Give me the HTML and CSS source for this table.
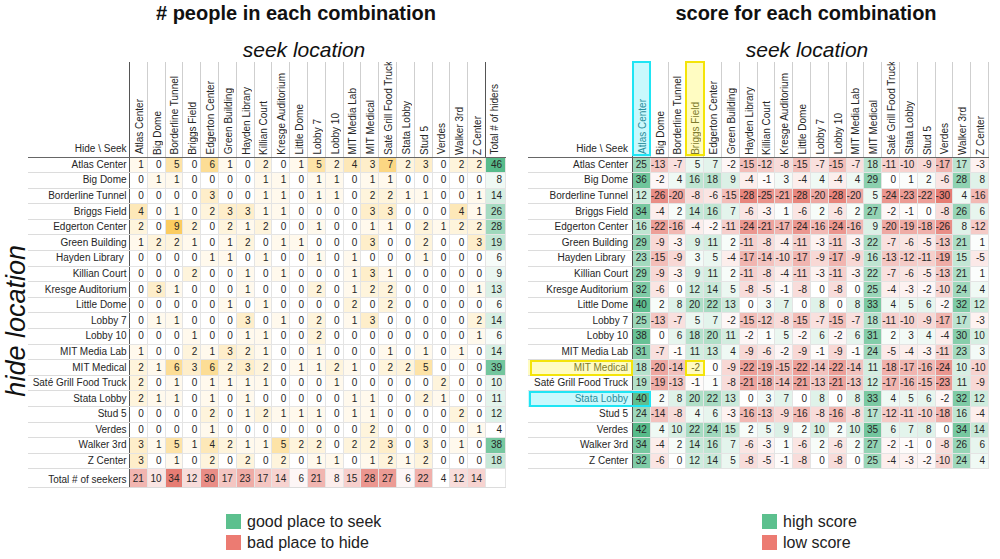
FILE: index.html
```html
<!DOCTYPE html>
<html lang="en">
<head>
<meta charset="utf-8">
<title>Hide and seek combinations</title>
<link rel="stylesheet" href="styles.css">
<script src="script.js" defer></script>
</head>
<body>
<div class="panels">
  <section class="panel panel-people">
    <h2 class="title"># people in each combination</h2>
    <div class="axis-seek">seek location</div>
    <div class="chart">
      <div class="axis-hide"><span>hide location</span></div>
      <table class="grid grid-people" id="people-table"></table>
    </div>
  </section>
  <section class="panel panel-score">
    <h2 class="title">score for each combination</h2>
    <div class="axis-seek">seek location</div>
    <div class="chart">
      <table class="grid grid-score" id="score-table"></table>
      <div class="mark mark-cyan mark-atlas"></div>
      <div class="mark mark-yellow mark-briggs"></div>
      <div class="mark mark-yellow mark-medical"></div>
      <div class="mark mark-yellow mark-medcell"></div>
      <div class="mark mark-cyan mark-stata"></div>
    </div>
  </section>
</div>
<div class="legend">
  <ul class="key">
    <li><i class="swatch swatch-good"></i>good place to seek</li>
    <li><i class="swatch swatch-bad"></i>bad place to hide</li>
  </ul>
  <ul class="key">
    <li><i class="swatch swatch-good"></i>high score</li>
    <li><i class="swatch swatch-bad"></i>low score</li>
  </ul>
</div>
</body>
</html>
```

FILE: styles.css
```css
* { box-sizing: border-box; }
html, body { margin: 0; padding: 0; }
body {
  width: 1000px;
  height: 559px;
  overflow: hidden;
  background: #fff;
  font-family: "Liberation Sans", Arial, sans-serif;
  color: #222;
}
.panels { display: flex; height: 500px; }
.panel { flex: none; overflow: hidden; }
.panel-people { width: 506px; }
.panel-score { width: 494px; }

.title {
  margin: 0;
  font-size: 20px;
  font-weight: bold;
  line-height: 27px;
  text-align: center;
  white-space: nowrap;
  color: #111;
}
.panel-people .title { padding-left: 86px; }
.panel-score .title { padding-left: 106px; }

.axis-seek {
  height: 35px;
  padding-top: 11px;
  font-size: 21px;
  font-style: italic;
  line-height: 24px;
  text-align: center;
  white-space: nowrap;
  color: #111;
}
.panel-people .axis-seek { padding-left: 102px; }
.panel-score .axis-seek { padding-left: 108px; }

.chart { display: flex; align-items: flex-start; }
.panel-score .chart { margin-left: 22px; position: relative; }

.axis-hide {
  width: 28px;
  height: 415px;
  padding-top: 103px;
  display: flex;
  align-items: center;
  justify-content: flex-end;
}
.axis-hide span {
  writing-mode: vertical-rl;
  transform: rotate(180deg);
  font-size: 27px;
  font-style: italic;
  line-height: 24px;
  white-space: nowrap;
  color: #111;
}

/* tables */
.grid {
  border-collapse: collapse;
  table-layout: fixed;
  font-size: 10px;
  color: #262626;
}
.grid-people { width: 478px; }
.grid-score { width: 460.5px; }
.col-label { width: 102px; }
.grid-score .col-label { width: 104.5px; }
.col-data { width: 17.8px; }
.col-total { width: 20px; }

.grid th, .grid td { padding: 0; font-weight: normal; white-space: nowrap; overflow: hidden; }

.grid thead th {
  height: 95px;
  vertical-align: bottom;
  border-bottom: 1px solid #666;
  border-left: 1px solid #cfcfcf;
}
.grid thead th.corner {
  border-left: none;
  text-align: right;
  padding: 0 2.5px 3px 0;
}
.grid-score thead th.corner { padding-right: 4px; }
.grid-score thead th:last-child { border-right: 1px solid #cfcfcf; }

.vh {
  height: 94px;
  display: flex;
  align-items: flex-end;
  justify-content: flex-end;
  padding: 0 1px 2px 0;
}
.vh span {
  writing-mode: vertical-rl;
  transform: rotate(180deg);
  line-height: 12px;
  white-space: nowrap;
}
.grid thead th.total .vh { justify-content: center; padding-right: 2px; }

.grid tbody tr { height: 15.6px; }
.grid tbody th {
  text-align: right;
  padding-right: 2.5px;
  border-bottom: 1px solid #dcdcdc;
  line-height: 14px;
}
.grid-score tbody th { padding-right: 4px; }
.grid td {
  text-align: right;
  padding-right: 3px;
  line-height: 14px;
  border: 1px solid #e4e4e4;
}
.grid .first { border-left: 1px solid #555; }
.grid .total { border-left: 1px solid #555; }
.grid thead th.first, .grid thead th.total { border-left: 1px solid #555; }

.grid tfoot tr { height: 19px; }
.grid tfoot th, .grid tfoot td { border-top: 1px solid #555; border-bottom: 1px solid #dcdcdc; padding-top: 2px; }
.grid tfoot th { text-align: right; padding-right: 2.5px; }

.hl-cyan { background: #c9f9fd; color: #2a8d9b; }
.hl-yellow { background: #fffcc2; color: #7d7a2c; }
.grid td.hl-yellow { background: #fffbc0; color: #6f6c28; }

/* highlight frames over the score chart */
.mark {
  position: absolute;
  border: 2px solid;
  pointer-events: none;
}
.mark-cyan { border-color: #1fe5f4; }
.mark-yellow { border-color: #f4e409; }
.mark-atlas { left: 103.5px; top: -1px; width: 19.5px; height: 95px; }
.mark-briggs { left: 157px; top: -1px; width: 19.5px; height: 95px; }
.mark-medical { left: 2px; top: 297.5px; width: 103px; height: 16px; }
.mark-medcell { left: 157px; top: 297.5px; width: 19.5px; height: 16px; }
.mark-stata { left: 1px; top: 328.5px; width: 122px; height: 16.5px; }

/* legend */
.legend {
  display: grid;
  grid-template-columns: 536px auto;
  padding: 11px 0 0 226px;
}
.key { list-style: none; margin: 0; padding: 0; }
.key li {
  display: flex;
  align-items: center;
  height: 21px;
  font-size: 16px;
  color: #222;
  white-space: nowrap;
}
.swatch { display: block; width: 15px; height: 15px; margin-right: 6px; }
.swatch-good { background: #5cc08e; }
.swatch-bad { background: #ec7b72; }
```

FILE: script.js
```js
(function () {
  var names = ["Atlas Center", "Big Dome", "Borderline Tunnel", "Briggs Field", "Edgerton Center",
    "Green Building", "Hayden Library", "Killian Court", "Kresge Auditorium", "Little Dome",
    "Lobby 7", "Lobby 10", "MIT Media Lab", "MIT Medical", "Saté Grill Food Truck",
    "Stata Lobby", "Stud 5", "Verdes", "Walker 3rd", "Z Center"];
  var rowLabels = names.map(function (n) { return n === "Hayden Library" ? n + "\u00a0" : n; });

  var people = [
    [1,0,5,0,6,1,0,2,0,1,5,2,4,3,7,2,3,0,2,2],
    [0,1,1,0,0,0,0,1,1,0,1,1,0,1,1,0,0,0,0,0],
    [0,0,0,0,3,0,0,1,1,0,1,1,0,2,2,1,1,0,0,1],
    [4,0,1,0,2,3,3,1,1,0,0,0,0,3,3,0,0,0,4,1],
    [2,0,9,2,0,2,1,2,0,0,1,0,0,1,1,0,2,1,2,2],
    [1,2,2,1,0,1,2,0,1,1,0,0,0,3,0,0,2,0,0,3],
    [0,0,0,0,1,1,0,1,0,0,1,0,1,0,0,0,1,0,0,0],
    [0,0,0,2,0,0,1,0,1,0,0,0,1,3,1,0,0,0,0,0],
    [0,3,1,0,0,0,1,0,0,0,2,0,1,2,2,0,0,0,0,1],
    [0,0,0,0,0,1,0,1,0,0,0,0,2,0,2,0,0,0,0,0],
    [0,1,1,0,0,0,3,0,1,0,2,0,1,3,0,0,0,0,0,2],
    [0,0,0,1,0,0,1,1,0,0,2,0,0,0,0,0,0,0,0,1],
    [1,0,0,2,1,3,2,1,0,0,1,0,0,0,1,0,1,0,1,0],
    [2,1,6,3,6,2,3,2,0,1,1,2,1,0,2,2,5,0,0,0],
    [2,0,1,0,1,1,1,1,0,0,0,1,0,0,0,0,0,2,0,0],
    [2,1,1,0,1,0,1,0,0,0,0,0,1,1,0,0,2,1,0,0],
    [0,0,0,0,2,0,1,2,1,1,1,0,1,1,0,0,0,0,2,0],
    [0,0,0,0,1,0,0,0,0,0,0,0,0,2,0,0,0,0,0,1],
    [3,1,5,1,4,2,1,1,5,2,2,0,2,2,3,0,3,0,1,0],
    [3,0,1,0,2,0,2,0,2,0,1,1,0,1,2,1,2,0,0,0]
  ];
  var base = [25,-13,-7,5,7,-2,-15,-12,-8,-15,-7,-15,-7,18,-11,-10,-9,-17,17,-3];
  var shift = [0,11,-13,9,-9,4,-2,4,7,15,0,13,6,-7,-6,15,-1,17,9,7];

  var YEL = [251, 204, 96], GRN = [87, 187, 138], RED = [230, 124, 115];

  function mix(c, t) {
    t = Math.max(0, Math.min(1, t));
    if (t === 0) return "";
    var r = Math.round(255 + (c[0] - 255) * t);
    var g = Math.round(255 + (c[1] - 255) * t);
    var b = Math.round(255 + (c[2] - 255) * t);
    return "rgb(" + r + "," + g + "," + b + ")";
  }
  function td(v, bg, cls) {
    return "<td" + (cls ? ' class="' + cls + '"' : "") +
      (bg ? ' style="background:' + bg + '"' : "") + ">" + v + "</td>";
  }
  function colgroup(total) {
    var h = '<colgroup><col class="col-label">';
    for (var j = 0; j < names.length; j++) h += '<col class="col-data">';
    if (total) h += '<col class="col-total">';
    return h + "</colgroup>";
  }
  function head(hl, total) {
    var h = '<thead><tr><th class="corner">Hide \\ Seek</th>';
    names.forEach(function (n, j) {
      var cls = "colhead" + (j === 0 ? " first" : "") + (hl[j] ? " " + hl[j] : "");
      h += '<th class="' + cls + '"><div class="vh"><span>' + n + "</span></div></th>";
    });
    if (total) h += '<th class="colhead total"><div class="vh"><span>Total # of hiders</span></div></th>';
    return h + "</tr></thead>";
  }

  /* people table */
  var rowTot = people.map(function (r) { return r.reduce(function (a, b) { return a + b; }, 0); });
  var colTot = names.map(function (_, j) { return people.reduce(function (a, r) { return a + r[j]; }, 0); });
  var html = colgroup(true) + head({}, true) + "<tbody>";
  people.forEach(function (row, i) {
    html += "<tr><th>" + rowLabels[i] + "</th>";
    row.forEach(function (v, j) { html += td(v, mix(YEL, v / 9), j === 0 ? "first" : ""); });
    html += td(rowTot[i], mix(GRN, (rowTot[i] - 4) / 42), "total") + "</tr>";
  });
  html += "</tbody><tfoot><tr><th>Total # of seekers</th>";
  colTot.forEach(function (v, j) { html += td(v, mix(RED, (v - 4) / 30), j === 0 ? "first" : ""); });
  html += td("", "", "total") + "</tr></tfoot>";
  document.getElementById("people-table").innerHTML = html;

  /* score table */
  var hlHead = { 0: "hl-cyan", 3: "hl-yellow" };
  var hlRow = { 13: "hl-yellow", 15: "hl-cyan" };
  var s = colgroup(false) + head(hlHead, false) + "<tbody>";
  names.forEach(function (_, i) {
    s += "<tr><th" + (hlRow[i] ? ' class="' + hlRow[i] + '"' : "") + ">" + rowLabels[i] + "</th>";
    base.forEach(function (b, j) {
      var v = b + shift[i];
      var cls = j === 0 ? "first" : "";
      if (i === 13 && j === 3) {
        s += td(v, "", "hl-yellow");
      } else {
        s += td(v, v < 0 ? mix(RED, -v / 30) : mix(GRN, v / 42), cls);
      }
    });
    s += "</tr>";
  });
  s += "</tbody>";
  document.getElementById("score-table").innerHTML = s;
})();
```
